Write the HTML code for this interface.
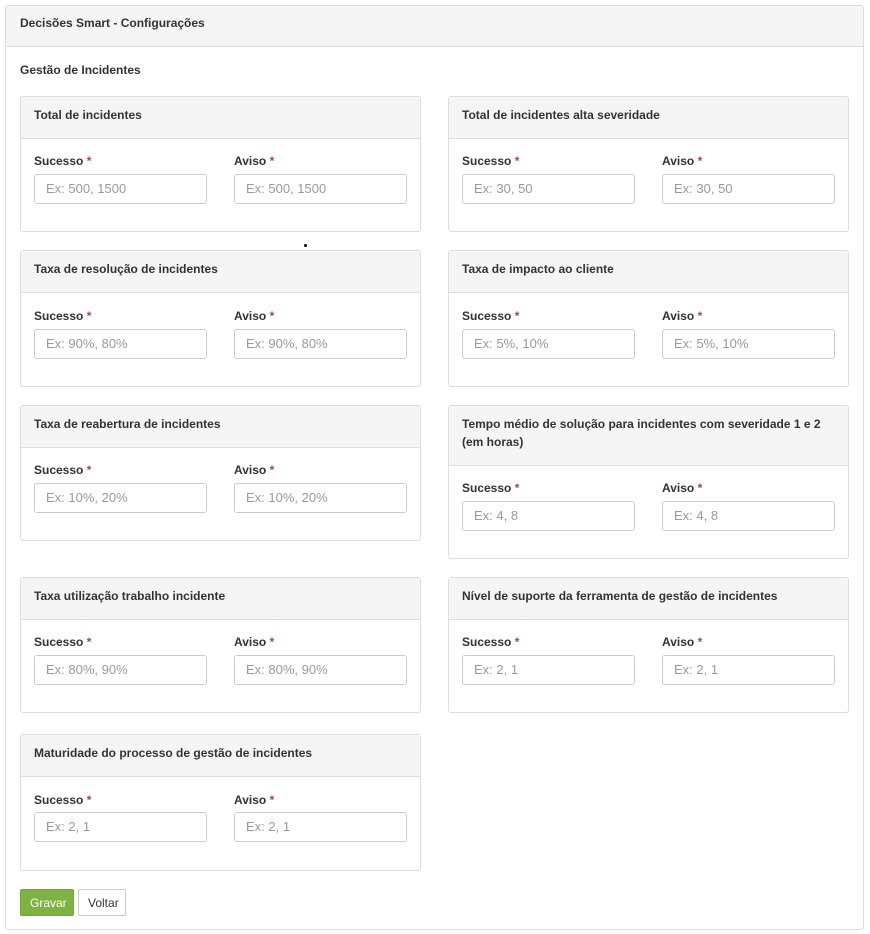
<!DOCTYPE html>
<html><head><meta charset="utf-8"><style>
*{box-sizing:border-box;margin:0;padding:0}
body{width:870px;height:934px;background:#fff;font-family:"Liberation Sans",sans-serif;color:#333;position:relative;overflow:hidden}
.outer{position:absolute;left:5px;top:5px;width:859px;height:925px;border:1px solid #ddd;border-radius:3px}
.oh{position:absolute;left:0;top:0;right:0;height:41px;background:#f5f5f5;border-bottom:1px solid #ddd;font-weight:bold;font-size:12px;padding:10px 14px}
.sub{position:absolute;left:20px;top:63px;font-weight:bold;font-size:12px}
.p{position:absolute;width:401px;border:1px solid #ddd;border-radius:3px}
.ph{background:#f5f5f5;border-bottom:1px solid #ddd;font-weight:bold;font-size:12px;padding:9px 13px;line-height:18px;height:42px}
.ph.two{height:60px}
.lb{position:absolute;font-weight:bold;font-size:12px}
.lb span{color:#a94442}
.in{position:absolute;width:173px;height:30px;border:1px solid #ccc;border-radius:3px;font-size:13px;color:#999;padding:6px 11px}
.btn{position:absolute;top:889px;height:27px;font-size:12px;border-radius:2px;padding:6px 9px}
</style></head><body>
<div class="outer"><div class="oh">Decisões Smart - Configurações</div></div>
<div class="sub">Gestão de Incidentes</div>
<div style="position:absolute;left:304px;top:244px;width:3px;height:3px;border-radius:50%;background:#000"></div>

<div class="p" style="left:20px;top:96px;height:136px"><div class="ph">Total de incidentes</div>
<div class="lb" style="left:13px;top:57px">Sucesso <span>*</span></div><div class="lb" style="left:213px;top:57px">Aviso <span>*</span></div>
<div class="in" style="left:13px;top:77px">Ex: 500, 1500</div><div class="in" style="left:213px;top:77px">Ex: 500, 1500</div></div>

<div class="p" style="left:448px;top:96px;height:136px"><div class="ph">Total de incidentes alta severidade</div>
<div class="lb" style="left:13px;top:57px">Sucesso <span>*</span></div><div class="lb" style="left:213px;top:57px">Aviso <span>*</span></div>
<div class="in" style="left:13px;top:77px">Ex: 30, 50</div><div class="in" style="left:213px;top:77px">Ex: 30, 50</div></div>

<div class="p" style="left:20px;top:250px;height:137px"><div class="ph">Taxa de resolução de incidentes</div>
<div class="lb" style="left:13px;top:58px">Sucesso <span>*</span></div><div class="lb" style="left:213px;top:58px">Aviso <span>*</span></div>
<div class="in" style="left:13px;top:78px">Ex: 90%, 80%</div><div class="in" style="left:213px;top:78px">Ex: 90%, 80%</div></div>

<div class="p" style="left:448px;top:250px;height:137px"><div class="ph">Taxa de impacto ao cliente</div>
<div class="lb" style="left:13px;top:58px">Sucesso <span>*</span></div><div class="lb" style="left:213px;top:58px">Aviso <span>*</span></div>
<div class="in" style="left:13px;top:78px">Ex: 5%, 10%</div><div class="in" style="left:213px;top:78px">Ex: 5%, 10%</div></div>

<div class="p" style="left:20px;top:405px;height:136px"><div class="ph">Taxa de reabertura de incidentes</div>
<div class="lb" style="left:13px;top:57px">Sucesso <span>*</span></div><div class="lb" style="left:213px;top:57px">Aviso <span>*</span></div>
<div class="in" style="left:13px;top:77px">Ex: 10%, 20%</div><div class="in" style="left:213px;top:77px">Ex: 10%, 20%</div></div>

<div class="p" style="left:448px;top:405px;height:154px"><div class="ph two">Tempo médio de solução para incidentes com severidade 1 e 2 (em horas)</div>
<div class="lb" style="left:13px;top:75px">Sucesso <span>*</span></div><div class="lb" style="left:213px;top:75px">Aviso <span>*</span></div>
<div class="in" style="left:13px;top:95px">Ex: 4, 8</div><div class="in" style="left:213px;top:95px">Ex: 4, 8</div></div>

<div class="p" style="left:20px;top:577px;height:136px"><div class="ph">Taxa utilização trabalho incidente</div>
<div class="lb" style="left:13px;top:57px">Sucesso <span>*</span></div><div class="lb" style="left:213px;top:57px">Aviso <span>*</span></div>
<div class="in" style="left:13px;top:77px">Ex: 80%, 90%</div><div class="in" style="left:213px;top:77px">Ex: 80%, 90%</div></div>

<div class="p" style="left:448px;top:577px;height:136px"><div class="ph">Nível de suporte da ferramenta de gestão de incidentes</div>
<div class="lb" style="left:13px;top:57px">Sucesso <span>*</span></div><div class="lb" style="left:213px;top:57px">Aviso <span>*</span></div>
<div class="in" style="left:13px;top:77px">Ex: 2, 1</div><div class="in" style="left:213px;top:77px">Ex: 2, 1</div></div>

<div class="p" style="left:20px;top:734px;height:137px"><div class="ph">Maturidade do processo de gestão de incidentes</div>
<div class="lb" style="left:13px;top:58px">Sucesso <span>*</span></div><div class="lb" style="left:213px;top:58px">Aviso <span>*</span></div>
<div class="in" style="left:13px;top:77px">Ex: 2, 1</div><div class="in" style="left:213px;top:77px">Ex: 2, 1</div></div>

<div class="btn" style="left:20px;width:54px;background:#7cb342;color:#fff;border:1px solid #72a83b">Gravar</div>
<div class="btn" style="left:78px;width:48px;background:#fff;border:1px solid #ccc">Voltar</div>
</body></html>
